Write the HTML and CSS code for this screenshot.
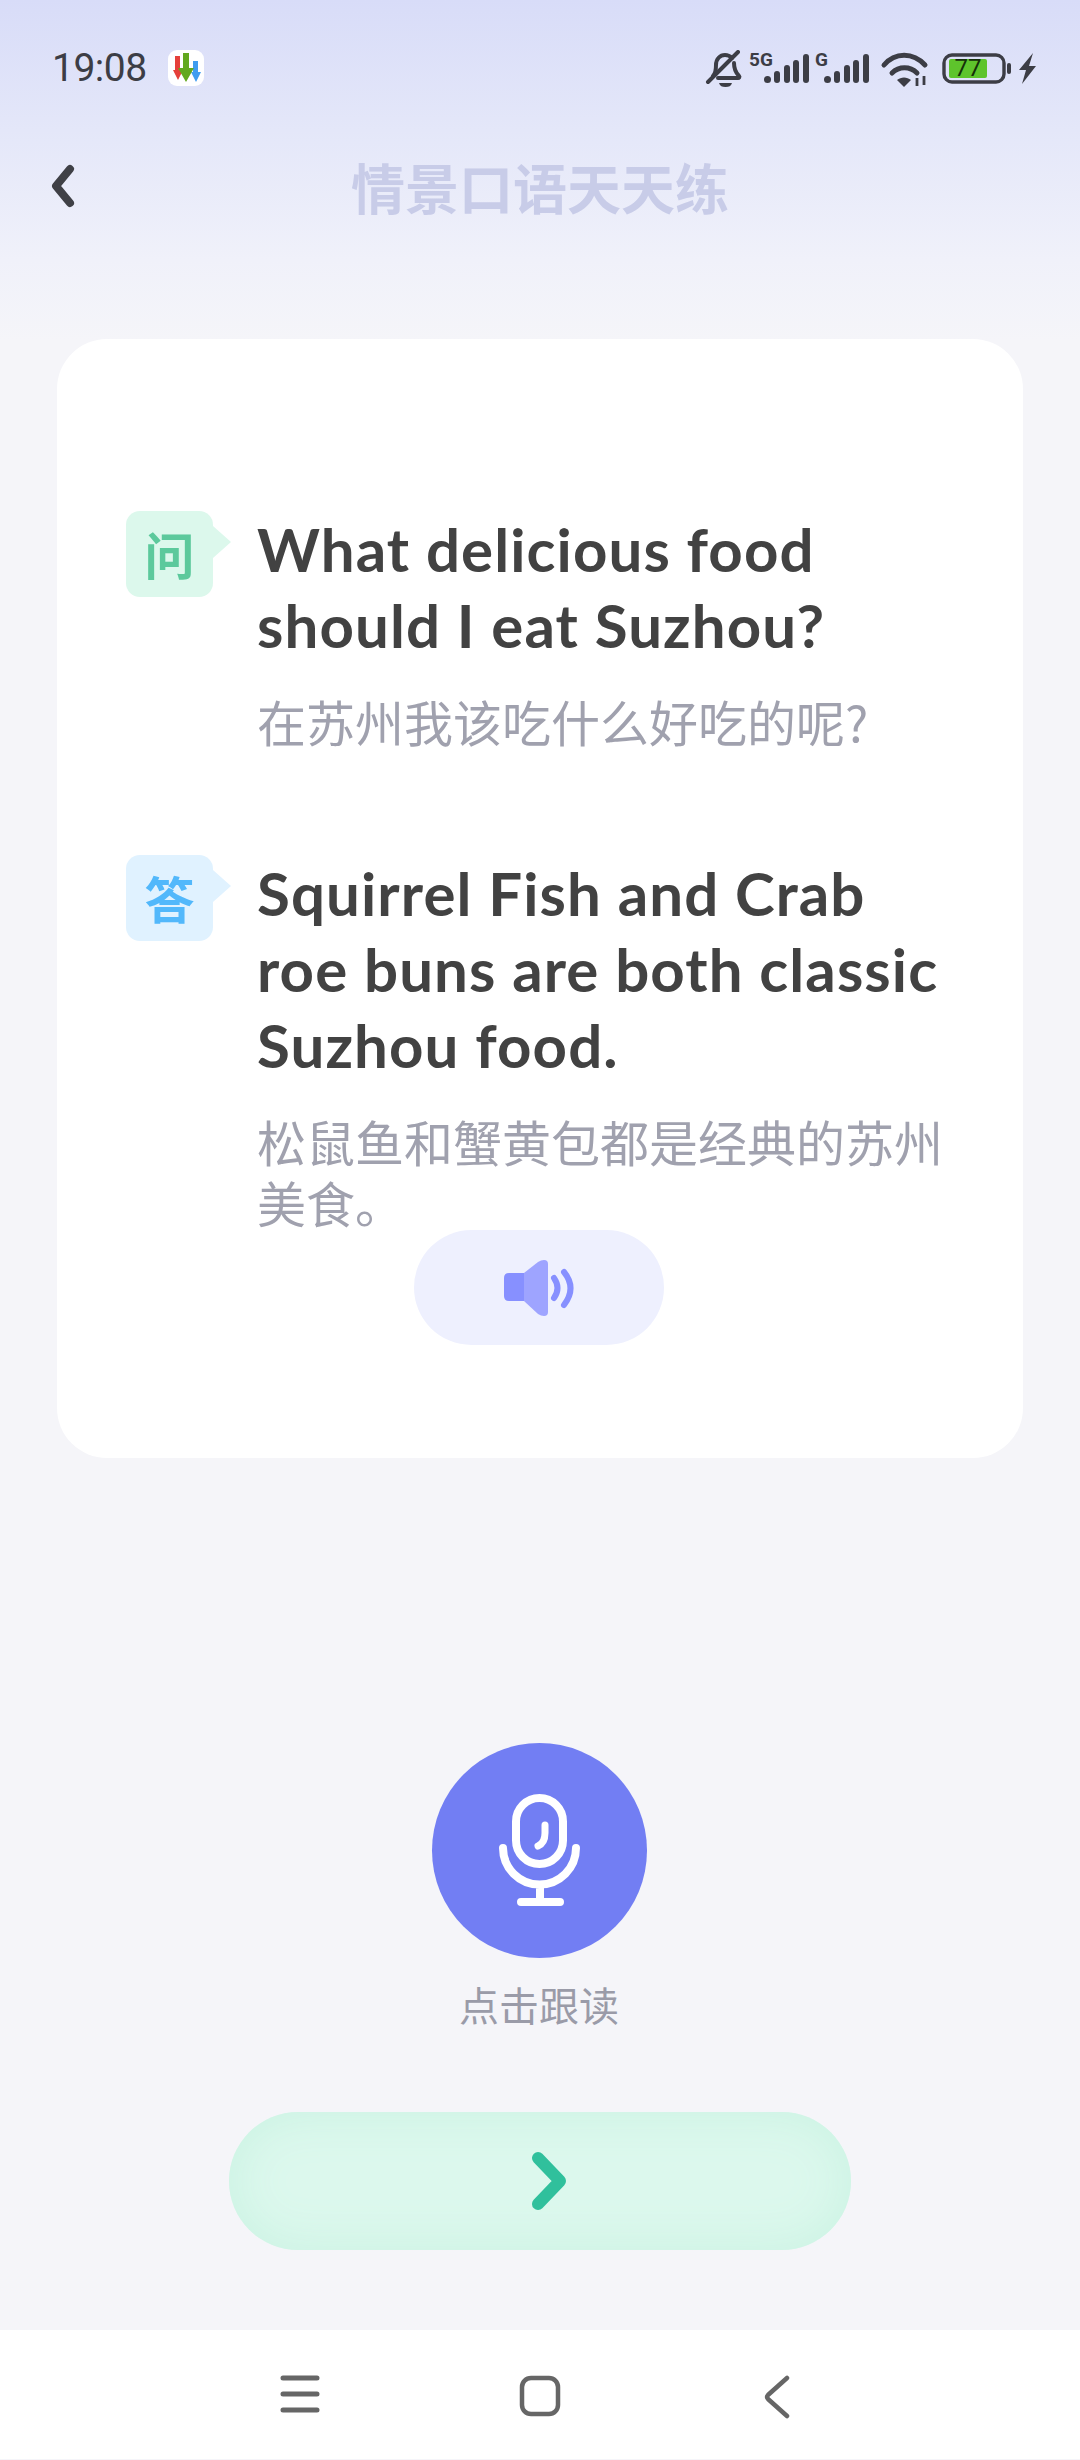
FILE: index.html
```html
<!DOCTYPE html>
<html lang="zh">
<head>
<meta charset="utf-8">
<title>情景口语天天练</title>
<link rel="stylesheet" href="styles.css">
</head>
<body>
<div class="screen">
  <div class="status">
    <div class="status-left">
      <span class="time">19:08</span>
      <svg class="app-icon" width="36" height="36" viewBox="0 0 36 36">
        <rect width="36" height="36" rx="9" fill="#fff"/>
        <path d="M7 6h5v14h3l-5 10-5-10h2z" fill="#e5403a"/>
        <path d="M25 11h5v11h3l-5 10-5-10h2z" fill="#3f9cf0"/>
        <path d="M15 3h6v15h5l-8 14-8-14h5z" fill="#62a81e"/>
      </svg>
    </div>
    <svg class="status-right" width="340" height="40" viewBox="700 50 340 40">
      <g fill="none" stroke="#3c3d45" stroke-width="4" stroke-linecap="round" stroke-linejoin="round">
        <path d="M713 76c3-3 3-8 3-11 0-6 4-10 9-10 3 0 5 1 7 3M734 63c0 5 1 9 5 13 1 1 0 2-1 2h-20"/>
        <path d="M708 82 738 52"/>
      </g>
      <path d="M719 83h13c-1 3-3 4-6.500 4s-5.500-1-6.500-4z" fill="#3c3d45"/>
      <text x="749" y="66" class="net">5G</text>
      <g fill="#3c3d45">
        <rect x="764" y="76" width="7" height="7" rx="3.500"/>
        <rect x="774" y="71" width="6" height="12" rx="3"/>
        <rect x="784" y="65" width="6" height="18" rx="3"/>
        <rect x="793" y="60" width="6" height="23" rx="3"/>
        <rect x="803" y="54" width="6" height="29" rx="3"/>
      </g>
      <text x="815" y="66" class="net">G</text>
      <g fill="#3c3d45">
        <rect x="824" y="76" width="7" height="7" rx="3.500"/>
        <rect x="834" y="71" width="6" height="12" rx="3"/>
        <rect x="844" y="65" width="6" height="18" rx="3"/>
        <rect x="853" y="60" width="6" height="23" rx="3"/>
        <rect x="863" y="54" width="6" height="29" rx="3"/>
      </g>
      <g fill="none" stroke="#3c3d45" stroke-width="5" stroke-linecap="round">
        <path d="M884 65c11-13 29-13 41 0"/>
        <path d="M892 73c7-7 18-7 25 0"/>
      </g>
      <path d="M897 80c4-3.500 10-3.500 14 0l-7 7z" fill="#3c3d45"/>
      <path d="M917 78v8M924 76v9" stroke="#3c3d45" stroke-width="2.800"/>
      <rect x="944" y="55" width="60" height="27" rx="8" fill="none" stroke="#3c3d45" stroke-width="3.400"/>
      <rect x="949" y="59" width="38" height="19" rx="2" fill="#5ec42c"/>
      <text x="968" y="76" class="batt">77</text>
      <rect x="1007" y="63" width="4" height="11" rx="2" fill="#3c3d45"/>
      <path d="M1033 53 1019 70h7l-4 14 14-18h-7z" fill="#3c3d45"/>
    </svg>
  </div>

  <header class="topbar">
    <svg class="back" width="26" height="44" viewBox="0 0 26 44">
      <path d="M20 5 6 22l14 17" fill="none" stroke="#3f4046" stroke-width="8" stroke-linecap="round" stroke-linejoin="round"/>
    </svg>
    <h1 class="title">情景口语天天练</h1>
  </header>

  <main class="card">
    <section class="qa">
      <div class="badge badge-q">问</div>
      <div class="qa-text">
        <p class="en">What delicious food should I eat Suzhou?</p>
        <p class="cn">在苏州我该吃什么好吃的呢?</p>
      </div>
    </section>
    <section class="qa qa-a">
      <div class="badge badge-a">答</div>
      <div class="qa-text">
        <p class="en">Squirrel Fish and Crab roe buns are both classic Suzhou food.</p>
        <p class="cn">松鼠鱼和蟹黄包都是经典的苏州美食。</p>
      </div>
    </section>
    <div class="speaker">
      <svg width="80" height="64" viewBox="0 0 80 64">
        <path d="M9 17h15v28H9q-5 0-5-5V22q0-5 5-5z" fill="#8790ff"/>
        <path d="M24 17 38 6q3-2 6-2 4 0 4 4v48q0 4-4 4-3 0-6-2L24 45z" fill="#9ea4ff"/>
        <path d="M54 22q7 10 0 20M64 16q13 16 0 33" fill="none" stroke="#8790ff" stroke-width="6" stroke-linecap="round"/>
      </svg>
    </div>
  </main>

  <div class="record">
    <div class="mic">
      <svg width="215" height="215" viewBox="0 0 215 215" fill="none" stroke="#fff" stroke-linecap="round">
        <rect x="84" y="55" width="47" height="66" rx="23.500" stroke-width="8"/>
        <path d="M71 105a36.500 36.500 0 0 0 73 0M108 142v17M89 159h39" stroke-width="8"/>
        <path d="M113 82v8q0 10-7 13" stroke-width="7"/>
      </svg>
    </div>
    <div class="mic-label">点击跟读</div>
  </div>

  <div class="next">
    <svg width="40" height="60" viewBox="0 0 40 60">
      <path d="M8 7 30 30 8 53" fill="none" stroke="#30c09c" stroke-width="12" stroke-linecap="round" stroke-linejoin="round"/>
    </svg>
  </div>

  <nav class="navbar">
    <svg width="40" height="38" viewBox="0 0 40 38"><path d="M3 3h34M3 19h34M3 35h34" stroke="#666" stroke-width="5" stroke-linecap="round"/></svg>
    <svg class="nav-home" width="42" height="42" viewBox="0 0 42 42"><rect x="3" y="3" width="36" height="36" rx="9" fill="none" stroke="#666" stroke-width="4.500"/></svg>
    <svg class="nav-back" width="28" height="44" viewBox="0 0 28 44"><path d="M24 3 5 20q-2 2 0 4l19 17" fill="none" stroke="#666" stroke-width="4.500" stroke-linecap="round"/></svg>
  </nav>
</div>
</body>
</html>
```
FILE: styles.css
```css
* { box-sizing: border-box; margin: 0; padding: 0; }
html, body { width: 1080px; height: 2460px; overflow: hidden; }
body { background: #f5f5f9; font-family: "Lato", "Noto Sans CJK SC", sans-serif; }
.screen {
  width: 1080px; height: 2460px; display: flex; flex-direction: column;
  background: linear-gradient(180deg, #d8dcf8 0, #e4e7f9 130px, #f0f1fa 260px, #f5f5f9 340px, #f5f5f9 100%);
}
.status { height: 136px; display: flex; align-items: center; justify-content: space-between; padding: 0 40px 0 52px; }
.status-left { display: flex; align-items: center; gap: 21px; }
.time { font: 400 39px/40px "Roboto", sans-serif; letter-spacing: -0.5px; color: #3c3d45; }
.app-icon { display: block; }
.status-right { display: block; margin-top: 4px; }
.net { font: 700 19px "Roboto", sans-serif; fill: #3c3d45; }
.batt { font: 400 24px "Roboto", sans-serif; fill: #15300a; text-anchor: middle; }
.topbar { height: 102px; position: relative; display: flex; align-items: center; justify-content: center; }
.back { position: absolute; left: 50px; top: 28px; }
.title { font: 700 54px/66px "Noto Sans CJK SC", sans-serif; color: #c8cce8; }
.card {
  margin: 101px 57px 0; height: 1119px; background: #fff; border-radius: 50px;
  padding: 172px 0 0 69px; display: flex; flex-direction: column;
}
.qa { display: flex; }
.qa-a { margin-top: 104px; }
.badge {
  position: relative; width: 87px; height: 86px; margin-right: 44px; flex: none;
  border-radius: 14px; text-align: center;
  font: 700 50px/84px "Noto Sans CJK SC", sans-serif;
}
.badge::after {
  content: ""; position: absolute; left: 100%; top: 15px;
  border-left: 18px solid currentColor; border-top: 16px solid transparent; border-bottom: 16px solid transparent;
}
.badge-q { background: #dcf8ec; color: #5cc99c; }
.badge-q::after { border-left-color: #dcf8ec; }
.badge-a { background: #e0f2ff; color: #52b8fb; }
.badge-a::after { border-left-color: #e0f2ff; }
.qa-text { width: 693px; }
.en { font: 700 60px/76px "Lato", "Noto Sans CJK SC", sans-serif; letter-spacing: 1.1px; color: #424242; }
.cn { margin-top: 27px; font: 400 49px/61px "Noto Sans CJK SC", sans-serif; color: #a0a1ae; }
.speaker {
  width: 250px; height: 115px; margin: -2px 0 0 288px; border-radius: 58px; background: #eef0fe;
  display: flex; align-items: center; justify-content: center; padding-left: 2px;
}
.speaker svg { display: block; }
.record { margin-top: 285px; display: flex; flex-direction: column; align-items: center; padding-right: 2px; }
.mic { width: 215px; height: 215px; border-radius: 50%; background: #727ef3; }
.mic svg { display: block; }
.mic-label { margin-top: 21px; font: 400 40px/50px "Noto Sans CJK SC", sans-serif; color: #9a9ba8; }
.next {
  margin: 83px auto 0; width: 622px; height: 138px; border-radius: 69px;
  background: #dcf8ed; box-shadow: inset 0 0 50px #c9f2e2;
  display: flex; align-items: center; justify-content: center; padding-left: 20px;
}
.navbar {
  margin-top: 80px; height: 129px; background: #fff;
  display: flex; align-items: flex-start; gap: 199px; padding: 45px 0 0 280px;
}
.nav-back { margin-left: 3px; }
```
